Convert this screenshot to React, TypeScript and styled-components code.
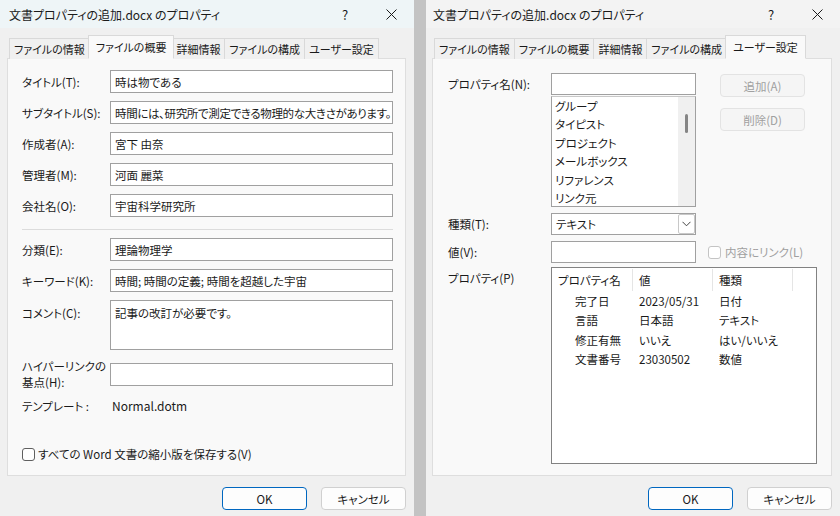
import { Fragment } from "react";
import styled, { createGlobalStyle } from "styled-components";

const GlobalStyle = createGlobalStyle`
  html, body {
    margin: 0;
    padding: 0;
  }
  body {
    background: #c3c3c3;
    font-family: "Noto Sans CJK JP", "Noto Sans", sans-serif;
    font-size: 11.5px;
    color: #1a1a1a;
    font-feature-settings: "palt";
  }
`;

const Screen = styled.div`
  display: flex;
  gap: 12px;
  width: 840px;
  height: 516px;
  overflow: hidden;
`;

const Window = styled.div`
  width: 414px;
  height: 516px;
  flex-shrink: 0;
  background: #f0f0f0;
  display: flex;
  flex-direction: column;
`;

const TitleBar = styled.div<{ $active?: boolean }>`
  height: 28px;
  display: flex;
  align-items: center;
  padding-left: ${(p) => (p.$active ? 9 : 7)}px;
  background: ${(p) => (p.$active ? "#eef5f7" : "#f3f3f3")};
  font-size: 12px;
`;

const TitleText = styled.div`
  flex: 1;
  white-space: nowrap;
`;

const TitleButton = styled.div`
  width: 46px;
  height: 28px;
  display: flex;
  align-items: center;
  justify-content: center;
  font-size: 13px;
`;

const TabStrip = styled.div<{ $inset: number }>`
  height: 30px;
  display: flex;
  align-items: flex-end;
  padding-left: ${(p) => p.$inset + 2}px;
`;

const Tab = styled.div<{ $active?: boolean }>`
  position: relative;
  z-index: ${(p) => (p.$active ? 1 : 0)};
  height: ${(p) => (p.$active ? 24 : 21)}px;
  box-sizing: border-box;
  padding: 0 ${(p) => (p.$active ? 7 : 4)}px;
  margin: 0 ${(p) => (p.$active ? -2 : 0)}px -1px 0;
  margin-left: ${(p) => (p.$active ? -2 : -1)}px;
  border: 1px solid #d9d9d9;
  border-bottom: ${(p) => (p.$active ? "1px solid #f9f9f9" : "none")};
  background: ${(p) => (p.$active ? "#f9f9f9" : "#f0f0f0")};
  display: flex;
  align-items: center;
  font-size: 11px;
  white-space: nowrap;
  &:first-child {
    margin-left: 0;
  }
`;

const Panel = styled.div<{ $inset: number }>`
  margin-left: ${(p) => p.$inset}px;
  width: ${(p) => 406 - p.$inset}px;
  height: 418px;
  box-sizing: border-box;
  background: #f9f9f9;
  border: 1px solid #dedede;
`;

const ButtonRow = styled.div`
  display: flex;
  justify-content: flex-end;
  gap: 14px;
  padding-right: 8px;
  margin-top: 11px;
`;

const Button = styled.div<{ $primary?: boolean; $disabled?: boolean }>`
  width: 85px;
  height: 23px;
  box-sizing: border-box;
  border-radius: 4px;
  border: 1px solid
    ${(p) => (p.$primary ? "#0067c0" : p.$disabled ? "#e3e3e3" : "#d0d0d0")};
  background: ${(p) => (p.$disabled ? "#f5f5f5" : "#fdfdfd")};
  color: ${(p) => (p.$disabled ? "#a0a0a0" : "#1a1a1a")};
  display: flex;
  align-items: center;
  justify-content: center;
`;

/* ---- left: summary tab ---- */

const SummaryForm = styled.div`
  padding: 11px 12px 0 14px;
`;

const FieldGrid = styled.div`
  display: grid;
  grid-template-columns: 88px 1fr;
  row-gap: 8px;
  align-items: center;
`;

const Label = styled.div<{ $top?: boolean }>`
  align-self: ${(p) => (p.$top ? "start" : "center")};
  padding-top: ${(p) => (p.$top ? 5 : 0)}px;
  line-height: 16px;
  white-space: nowrap;
`;

const TextBox = styled.div<{ $height?: number; $tight?: boolean }>`
  height: ${(p) => p.$height ?? 23}px;
  box-sizing: border-box;
  border: 1px solid #a0a0a0;
  background: #fff;
  padding: ${(p) => (p.$height && p.$height > 30 ? "4px 4px" : "0 4px")};
  display: flex;
  align-items: ${(p) => (p.$height && p.$height > 30 ? "flex-start" : "center")};
  letter-spacing: ${(p) => (p.$tight ? "-0.35px" : "normal")};
  white-space: nowrap;
  overflow: hidden;
`;

const Separator = styled.div`
  grid-column: 1 / -1;
  height: 1px;
  background: #dcdcdc;
  margin-top: 4px;
`;

const StaticValue = styled.div`
  padding-left: 2px;
  line-height: 14px;
  font-size: 12px;
`;

const CheckRow = styled.div<{ $disabled?: boolean }>`
  display: flex;
  align-items: center;
  gap: 3px;
  color: ${(p) => (p.$disabled ? "#a0a0a0" : "#1a1a1a")};
  white-space: nowrap;
`;

const CheckBox = styled.div<{ $disabled?: boolean }>`
  width: 13px;
  height: 13px;
  box-sizing: border-box;
  border: 1px solid ${(p) => (p.$disabled ? "#c4c4c4" : "#5f5f5f")};
  border-radius: 3px;
  background: #fff;
`;

const ThumbnailRow = styled(CheckRow)`
  margin-top: 32px;
`;

/* ---- right: custom tab ---- */

const CustomForm = styled.div`
  display: grid;
  grid-template-columns: 103px 145px 1fr;
  row-gap: 6px;
  padding: 14px 14px 0 15px;
`;

const NameBox = styled.div`
  display: flex;
  flex-direction: column;
  gap: 1px;
`;

const ListBox = styled.div`
  height: 111px;
  box-sizing: border-box;
  border: 1px solid #a0a0a0;
  border-top-color: #c8c8c8;
  background: #fff;
  display: flex;
  overflow: hidden;
`;

const ListItems = styled.div`
  flex: 1;
  padding-left: 3px;
`;

const ListItem = styled.div`
  line-height: 18.4px;
  white-space: nowrap;
`;

const ScrollTrack = styled.div`
  width: 17px;
  background: #f0f0f0;
`;

const ScrollThumb = styled.div`
  width: 3px;
  height: 19px;
  margin: 17px 0 0 7px;
  border-radius: 2px;
  background: #858585;
`;

const SideButtons = styled.div`
  display: flex;
  flex-direction: column;
  gap: 11px;
  padding: 1px 0 0 24px;
`;

const Combo = styled(TextBox)`
  height: 22px;
  padding-right: 0;
  justify-content: space-between;
`;

const DropButton = styled.div`
  width: 17px;
  height: 20px;
  box-sizing: border-box;
  border: 1px solid #c8c8c8;
  border-radius: 2px;
  display: flex;
  align-items: center;
  justify-content: center;
`;

const LinkCheck = styled(CheckRow)`
  padding-left: 12px;
  gap: 4px;
`;

const ListView = styled.div`
  grid-column: 2 / 4;
  width: 266px;
  height: 197px;
  box-sizing: border-box;
  border: 1px solid #828282;
  background: #fff;
  margin-top: -2px;
`;

const TableGrid = styled.div`
  display: grid;
  grid-template-columns: 81px 80px 80px 1fr;
`;

const HeaderCell = styled.div<{ $last?: boolean }>`
  height: 22px;
  margin: 1px 0;
  padding-left: ${(p) => (p.$last ? 0 : 6)}px;
  border-right: ${(p) => (p.$last ? "none" : "1px solid #e5e5e5")};
  display: flex;
  align-items: center;
  white-space: nowrap;
`;

const Cell = styled.div<{ $indent?: number }>`
  line-height: 19.3px;
  padding-left: ${(p) => p.$indent ?? 6}px;
  white-space: nowrap;
`;

const SlimLabel = styled(Label)`
  line-height: 22px;
  align-self: start;
`;

const PropsLabel = styled(SlimLabel)`
  margin-top: -2px;
`;

const CloseIcon = () => (
  <svg width="11" height="11" viewBox="0 0 11 11">
    <path d="M0.5 0.5 L10.5 10.5 M10.5 0.5 L0.5 10.5" stroke="#1a1a1a" strokeWidth="1" />
  </svg>
);

const ChevronDown = () => (
  <svg width="9" height="6" viewBox="0 0 9 6">
    <path d="M0.5 0.8 L4.5 4.8 L8.5 0.8" stroke="#444" strokeWidth="1" fill="none" />
  </svg>
);

const tabNames = ["ファイルの情報", "ファイルの概要", "詳細情報", "ファイルの構成", "ユーザー設定"];

const windowTitle = "文書プロパティの追加.docx のプロパティ";

const summaryFields = [
  { label: "タイトル(T):", value: "時は物である" },
  { label: "サブタイトル(S):", value: "時間には、研究所で測定できる物理的な大きさがあります。" },
  { label: "作成者(A):", value: "宮下 由奈" },
  { label: "管理者(M):", value: "河面 麗菜" },
  { label: "会社名(O):", value: "宇宙科学研究所" },
];

const nameList = ["グループ", "タイピスト", "プロジェクト", "メールボックス", "リファレンス", "リンク元"];

const customProps = [
  { name: "完了日", value: "2023/05/31", type: "日付" },
  { name: "言語", value: "日本語", type: "テキスト" },
  { name: "修正有無", value: "いいえ", type: "はい/いいえ" },
  { name: "文書番号", value: "23030502", type: "数値" },
];

const DialogFrame = ({
  active,
  activeTab,
  inset,
  children,
}: {
  active?: boolean;
  activeTab: number;
  inset: number;
  children: React.ReactNode;
}) => (
  <Window>
    <TitleBar $active={active}>
      <TitleText>{windowTitle}</TitleText>
      <TitleButton>?</TitleButton>
      <TitleButton>
        <CloseIcon />
      </TitleButton>
    </TitleBar>
    <TabStrip $inset={inset}>
      {tabNames.map((name, i) => (
        <Tab key={name} $active={i === activeTab}>
          {name}
        </Tab>
      ))}
    </TabStrip>
    <Panel $inset={inset}>{children}</Panel>
    <ButtonRow>
      <Button $primary>OK</Button>
      <Button>キャンセル</Button>
    </ButtonRow>
  </Window>
);

const App = () => {
  return (
    <>
      <GlobalStyle />
      <Screen>
        <DialogFrame active activeTab={1} inset={7}>
          <SummaryForm>
            <FieldGrid>
              {summaryFields.map((f, i) => (
                <Fragment key={f.label}>
                  <Label>{f.label}</Label>
                  <TextBox $tight={i === 1}>{f.value}</TextBox>
                </Fragment>
              ))}
              <Separator />
              <Label>分類(E):</Label>
              <TextBox>理論物理学</TextBox>
              <Label>キーワード(K):</Label>
              <TextBox>時間; 時間の定義; 時間を超越した宇宙</TextBox>
              <Label $top>コメント(C):</Label>
              <TextBox $height={50}>記事の改訂が必要です。</TextBox>
              <Label>
                ハイパーリンクの
                <br />
                基点(H):
              </Label>
              <TextBox />
              <Label>テンプレート :</Label>
              <StaticValue>Normal.dotm</StaticValue>
            </FieldGrid>
            <ThumbnailRow>
              <CheckBox />
              すべての Word 文書の縮小版を保存する(V)
            </ThumbnailRow>
          </SummaryForm>
        </DialogFrame>

        <DialogFrame activeTab={4} inset={6}>
          <CustomForm>
            <SlimLabel>プロパティ名(N):</SlimLabel>
            <NameBox>
              <TextBox $height={22} />
              <ListBox>
                <ListItems>
                  {nameList.map((n) => (
                    <ListItem key={n}>{n}</ListItem>
                  ))}
                </ListItems>
                <ScrollTrack>
                  <ScrollThumb />
                </ScrollTrack>
              </ListBox>
            </NameBox>
            <SideButtons>
              <Button $disabled>追加(A)</Button>
              <Button $disabled>削除(D)</Button>
            </SideButtons>

            <Label>種類(T):</Label>
            <Combo>
              テキスト
              <DropButton>
                <ChevronDown />
              </DropButton>
            </Combo>
            <div />

            <Label>値(V):</Label>
            <TextBox $height={22} />
            <LinkCheck $disabled>
              <CheckBox $disabled />
              内容にリンク(L)
            </LinkCheck>

            <PropsLabel>プロパティ(P)</PropsLabel>
            <ListView>
              <TableGrid>
                <HeaderCell>プロパティ名</HeaderCell>
                <HeaderCell>値</HeaderCell>
                <HeaderCell>種類</HeaderCell>
                <HeaderCell $last />
                {customProps.map((row) => (
                  <Fragment key={row.name}>
                    <Cell $indent={23}>{row.name}</Cell>
                    <Cell>{row.value}</Cell>
                    <Cell>{row.type}</Cell>
                    <Cell />
                  </Fragment>
                ))}
              </TableGrid>
            </ListView>
          </CustomForm>
        </DialogFrame>
      </Screen>
    </>
  );
};

export default App;
